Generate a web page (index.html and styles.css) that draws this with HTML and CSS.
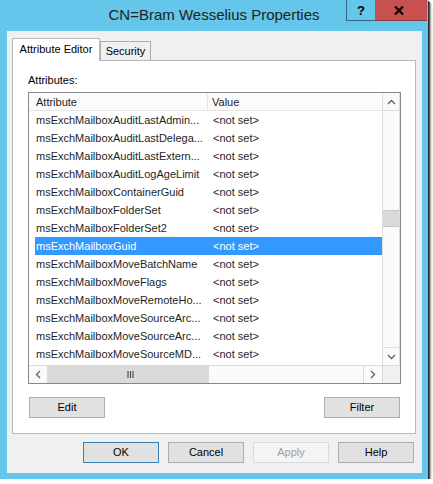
FILE: index.html
```html
<!DOCTYPE html>
<html>
<head>
<meta charset="utf-8">
<title>CN=Bram Wesselius Properties</title>
<link rel="stylesheet" href="styles.css">
</head>
<body>
<div class="window">
  <div class="titlebar">
    <div></div>
    <div class="title">CN=Bram Wesselius Properties</div>
    <div class="caps">
      <div class="cbtn help">?</div>
      <div class="cbtn close">
        <svg width="10" height="9" viewBox="0 0 10 9"><path d="M1 0.5 L9 8.5 M9 0.5 L1 8.5" stroke="#000" stroke-width="2.2" fill="none"/></svg>
      </div>
    </div>
  </div>
  <div class="client">
    <div class="tabs">
      <div class="tab active">Attribute Editor</div>
      <div class="tab inactive">Security</div>
    </div>
    <div class="panel">
      <div class="label">Attributes:</div>
      <div class="listview">
        <div class="lv-content">
          <div class="lv-header">
            <div class="h-attr">Attribute</div>
            <div class="h-val">Value</div>
          </div>
          <div class="row"><div class="c-attr">msExchMailboxAuditLastAdmin...</div><div class="c-val">&lt;not set&gt;</div></div>
          <div class="row"><div class="c-attr">msExchMailboxAuditLastDelega...</div><div class="c-val">&lt;not set&gt;</div></div>
          <div class="row"><div class="c-attr">msExchMailboxAuditLastExtern...</div><div class="c-val">&lt;not set&gt;</div></div>
          <div class="row"><div class="c-attr">msExchMailboxAuditLogAgeLimit</div><div class="c-val">&lt;not set&gt;</div></div>
          <div class="row"><div class="c-attr">msExchMailboxContainerGuid</div><div class="c-val">&lt;not set&gt;</div></div>
          <div class="row"><div class="c-attr">msExchMailboxFolderSet</div><div class="c-val">&lt;not set&gt;</div></div>
          <div class="row"><div class="c-attr">msExchMailboxFolderSet2</div><div class="c-val">&lt;not set&gt;</div></div>
          <div class="row sel"><div class="c-attr">msExchMailboxGuid</div><div class="c-val">&lt;not set&gt;</div></div>
          <div class="row"><div class="c-attr">msExchMailboxMoveBatchName</div><div class="c-val">&lt;not set&gt;</div></div>
          <div class="row"><div class="c-attr">msExchMailboxMoveFlags</div><div class="c-val">&lt;not set&gt;</div></div>
          <div class="row"><div class="c-attr">msExchMailboxMoveRemoteHo...</div><div class="c-val">&lt;not set&gt;</div></div>
          <div class="row"><div class="c-attr">msExchMailboxMoveSourceArc...</div><div class="c-val">&lt;not set&gt;</div></div>
          <div class="row"><div class="c-attr">msExchMailboxMoveSourceArc...</div><div class="c-val">&lt;not set&gt;</div></div>
          <div class="row"><div class="c-attr">msExchMailboxMoveSourceMD...</div><div class="c-val">&lt;not set&gt;</div></div>
        </div>
        <div class="vscroll">
          <div class="arrow up"><svg width="9" height="6" viewBox="0 0 9 6"><path d="M1 5 L4.5 1.5 L8 5" stroke="#606060" stroke-width="1.3" fill="none"/></svg></div>
          <div class="vtrack"><div class="vthumb"></div></div>
          <div class="arrow down"><svg width="9" height="6" viewBox="0 0 9 6"><path d="M1 1 L4.5 4.5 L8 1" stroke="#606060" stroke-width="1.3" fill="none"/></svg></div>
        </div>
        <div class="hscroll">
          <div class="harrow left"><svg width="6" height="9" viewBox="0 0 6 9"><path d="M5 1 L1.5 4.5 L5 8" stroke="#606060" stroke-width="1.3" fill="none"/></svg></div>
          <div class="hthumb"><svg width="7" height="7" viewBox="0 0 7 7"><path d="M1 0 V7 M3.5 0 V7 M6 0 V7" stroke="#505050" stroke-width="1.2" fill="none"/></svg></div>
          <div class="htrack"></div>
          <div class="harrow right"><svg width="6" height="9" viewBox="0 0 6 9"><path d="M1 1 L4.5 4.5 L1 8" stroke="#606060" stroke-width="1.3" fill="none"/></svg></div>
        </div>
        <div class="corner"></div>
      </div>
      <div class="pbtns">
        <button class="btn">Edit</button>
        <button class="btn">Filter</button>
      </div>
    </div>
    <div class="dlg">
      <button class="btn default">OK</button>
      <button class="btn">Cancel</button>
      <button class="btn disabled">Apply</button>
      <button class="btn">Help</button>
    </div>
  </div>
</div>
</body>
</html>
```
FILE: styles.css
```css
* { box-sizing: border-box; }
body {
  margin: 0;
  background: #ffffff;
  font-family: "Liberation Sans", Arial, sans-serif;
  font-size: 11px;
  color: #1e1e1e;
}
.window {
  width: 428px;
  height: 479px;
  background: #63c6ea;
  box-shadow: 1px 1px 0 #2e2e2e, 2px 2px 1px #555555, 3px 3px 2px rgba(0,0,0,0.35);
}
.titlebar {
  height: 31px;
  display: grid;
  grid-template-columns: 1fr auto 1fr;
}
.title {
  font-size: 15px;
  line-height: 29px;
  color: #222222;
  white-space: nowrap;
}
.caps {
  display: flex;
  justify-content: flex-end;
  align-items: flex-start;
  padding-right: 1px;
}
.cbtn {
  height: 21px;
  display: flex;
  align-items: center;
  justify-content: center;
}
.help {
  width: 29px;
  border-left: 1px solid #2f6a84;
  border-bottom: 1px solid #2f6a84;
  font-weight: bold;
  font-size: 13px;
  color: #000000;
}
.close {
  width: 52px;
  background: #c75050;
  border-bottom: 1px solid #8c3a3a;
  padding-right: 4px;
}
.client {
  margin: 0 6px 0 7px;
  height: 442px;
  background: #f0f0f0;
  padding: 7px 6px 10px 5px;
}
.tabs {
  display: flex;
  align-items: flex-end;
  height: 23px;
  margin-bottom: -1px;
}
.tab {
  position: relative;
  z-index: 1;
  text-align: center;
  line-height: 13px;
  color: #000000;
  white-space: nowrap;
}
.tab.active {
  width: 88px;
  height: 23px;
  background: #ffffff;
  border: 1px solid #b9b9b9;
  border-bottom: none;
  padding-top: 4px;
}
.tab.inactive {
  width: 51px;
  height: 20px;
  background: #f0f0f0;
  border: 1px solid #acacac;
  border-bottom-color: #b9b9b9;
  padding-top: 3px;
}
.panel {
  height: 374px;
  background: #ffffff;
  border: 1px solid #b9b9b9;
  padding: 13px 14px 15px 15px;
}
.label {
  line-height: 13px;
  margin-bottom: 5px;
  color: #000000;
}
.listview {
  height: 292px;
  border: 1px solid #828790;
  background: #ffffff;
  display: grid;
  grid-template-columns: 1fr 18px;
  grid-template-rows: 272px 18px;
}
.lv-content { overflow: hidden; }
.lv-header {
  display: flex;
  height: 18px;
  background: #fbfbfb;
  border-bottom: 1px solid #e5e5e5;
  padding-top: 1px;
  line-height: 16px;
}
.h-attr {
  width: 179px;
  padding-left: 7px;
  border-right: 1px solid #e5e5e5;
}
.h-val { padding-left: 4px; }
.row {
  display: flex;
  height: 18px;
  padding-top: 1px;
  line-height: 17px;
  margin-left: 6px;
  white-space: nowrap;
}
.c-attr {
  width: 173px;
  padding-left: 1px;
  overflow: hidden;
}
.c-val { padding-left: 5px; }
.row.sel {
  background: #3399ff;
  color: #ffffff;
}
.vscroll {
  display: flex;
  flex-direction: column;
  border-left: 1px solid #dcdcdc;
  border-right: 1px solid #dcdcdc;
  background: #fafafa;
}
.arrow {
  height: 18px;
  display: flex;
  align-items: center;
  justify-content: center;
}
.arrow.up { border-bottom: 1px solid #dcdcdc; }
.arrow.down { border-top: 1px solid #dcdcdc; }
.vtrack { flex: 1; }
.vthumb {
  margin-top: 99px;
  height: 17px;
  background: #dadada;
  border-top: 1px solid #c8c8c8;
  border-bottom: 1px solid #c8c8c8;
}
.hscroll {
  display: flex;
  border-top: 1px solid #dcdcdc;
  background: #fafafa;
}
.harrow {
  width: 19px;
  display: flex;
  align-items: center;
  justify-content: center;
}
.harrow.left { border-right: 1px solid #dcdcdc; }
.harrow.right { border-left: 1px solid #dcdcdc; }
.hthumb {
  width: 161px;
  background: #dadada;
  display: flex;
  align-items: center;
  justify-content: center;
  padding-left: 4px;
}
.htrack { flex: 1; }
.corner {
  background: #f0f0f0;
  border-top: 1px solid #dcdcdc;
  border-left: 1px solid #dcdcdc;
}
.pbtns {
  display: flex;
  justify-content: space-between;
  margin-top: 13px;
  padding: 0 1px;
}
.btn {
  width: 76px;
  height: 21px;
  margin: 0;
  padding: 0;
  background: #e1e1e1;
  border: 1px solid #adadad;
  border-radius: 0;
  font-family: "Liberation Sans", Arial, sans-serif;
  font-size: 11px;
  line-height: 19px;
  color: #000000;
  text-align: center;
}
.btn.default { border-color: #3c7fb1; }
.btn.disabled {
  background: #f4f4f4;
  border-color: #dadada;
  color: #a0a0a0;
}
.dlg {
  display: flex;
  justify-content: flex-end;
  gap: 9px;
  margin-top: 8px;
  padding-right: 2px;
}
```
